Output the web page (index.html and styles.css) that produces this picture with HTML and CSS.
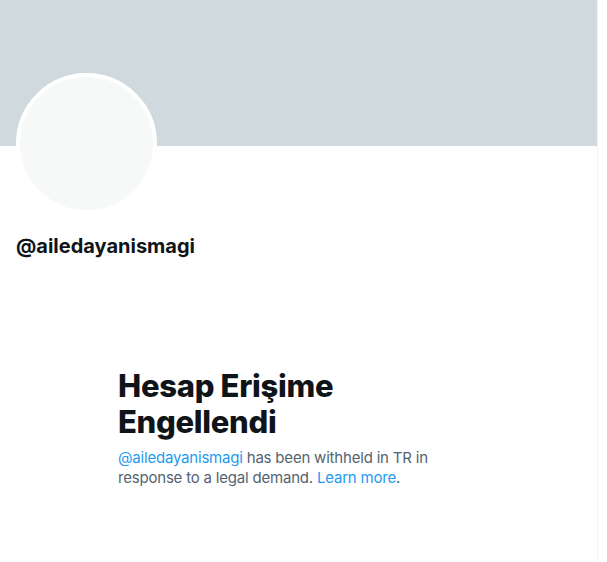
FILE: index.html
```html
<!DOCTYPE html>
<html>

<head>
    <link rel="stylesheet" href="styles.css">
</head>

<body>
    <div class="column">
        <div class="banner"></div>
        <div class="profile">
            <div class="avatar"></div>
            <div class="handle">@ailedayanismagi</div>
        </div>
        <div class="withheld">
            <h1 class="title">Hesap Erişime Engellendi</h1>
            <p class="desc"><a href="#">@ailedayanismagi</a> has been withheld in TR in response to a legal demand. <a href="#">Learn more</a>.</p>
        </div>
    </div>
</body>

</html>
```
FILE: styles.css
```css
* {
    margin: 0;
    padding: 0;
    box-sizing: border-box;
}

body {
    background-color: #fff;
    font-family: Inter, "Liberation Sans", sans-serif;
    color: #0f1419;
}

.column {
    width: 598px;
    height: 562px;
    border-right: 1px solid #eff3f4;
}

.banner {
    height: 146px;
    background-color: #cfd9de;
}

.profile {
    padding: 0 16px;
}

.avatar {
    width: 141px;
    height: 141px;
    margin-top: -73px;
    border-radius: 50%;
    border: 4px solid #fff;
    background-color: #f7f9f9;
}

.handle {
    margin-top: 20px;
    font-size: 20px;
    font-weight: 700;
    line-height: 24px;
}

.withheld {
    margin-top: 110px;
    padding-left: 118px;
    width: 460px;
}

.title {
    font-size: 31px;
    font-weight: 800;
    line-height: 36px;
    letter-spacing: -0.3px;
    margin-bottom: 8px;
}

.desc {
    font-size: 15px;
    line-height: 20px;
    letter-spacing: -0.2px;
    color: #536471;
}

.desc a {
    color: #1d9bf0;
    text-decoration: none;
}
```
